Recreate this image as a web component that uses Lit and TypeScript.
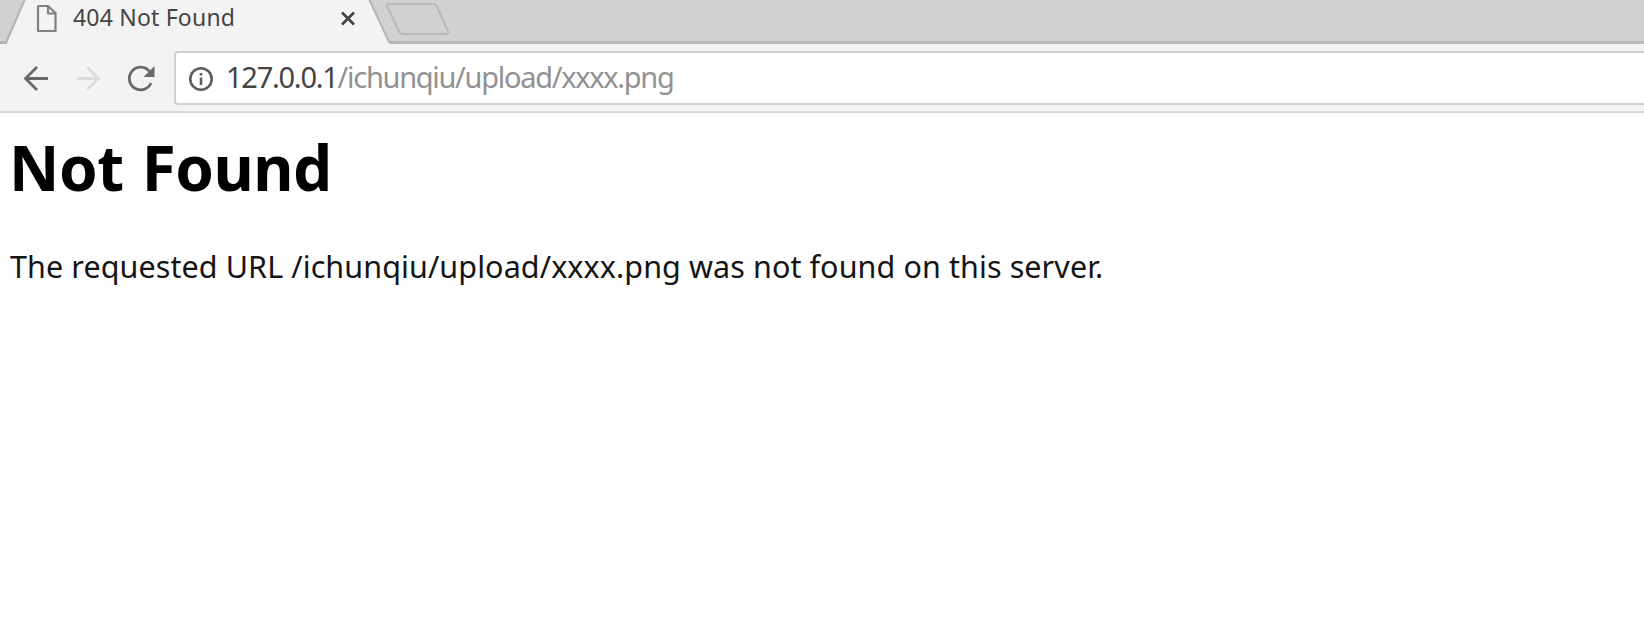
import { LitElement, html, css } from "lit";
import { customElement } from "lit/decorators.js";

@customElement("app-root")
export class AppRoot extends LitElement {
  static styles = css`
    :host { display: block; width: 100%; height: 644px; overflow: hidden; background: #fefefe; font-family: "Noto Sans", "Open Sans", sans-serif; }
    .strip { display: grid; height: 44px; background: #d1d1d1; }
    .shape { grid-area: 1 / 1; display: block; width: 100%; height: 44px; }
    .tab { grid-area: 1 / 1; display: flex; align-items: flex-start; z-index: 1; padding-left: 36px; }
    .page { width: 22px; height: 33px; flex: none; }
    .title { width: 282px; padding-left: 15px; box-sizing: border-box; font-size: 23px; line-height: 35px; color: #444; white-space: pre; letter-spacing: 0.2px; }
    .close { width: 16px; height: 33px; flex: none; }
    .bar { display: flex; height: 69px; box-sizing: border-box; padding-top: 7px; background: #f3f3f3; border-bottom: 2px solid #d7d7d8; }
    .nav { width: 174px; height: 54px; flex: none; }
    .box { flex: 1; height: 54px; box-sizing: border-box; border: 2px solid #d0d0d1; border-right: 0; border-radius: 4px 0 0 4px; background: #fff; display: flex; align-items: center; }
    .info { width: 26px; height: 26px; flex: none; margin-left: 12px; margin-top: 2px; }
    .url { font-size: 29px; line-height: 46px; white-space: pre; margin-left: 12px; margin-top: -2px; }
    .host { color: #444; letter-spacing: -1.25px; }
    .path { color: #929292; letter-spacing: -1.3px; }
    h1 { margin: 23px 0 0 9px; font-size: 62px; line-height: 62px; font-weight: 700; color: #000; white-space: pre; letter-spacing: -0.5px; word-spacing: 2.5px; }
    p { margin: 46px 0 0 10px; font-size: 30.5px; line-height: 44px; color: #151515; white-space: pre; letter-spacing: 0.09px; }
  `;
  render() {
    return html`
      <div class="strip">
        <svg class="shape" fill="none">
          <rect y="41" width="100%" height="3" fill="#b9b9b9"/>
          <path d="M25 -1L6 44H390L369 -1Z" fill="#f3f3f3"/>
          <path d="M25 -1L6 43H0M369 -1L389 42H396" stroke="#b4b4b4" stroke-width="2"/>
          <path d="M388 4H433Q436 4 437 7L448 31Q449 34 446 34H403Q400 34 399 31L387 6Q386 4 388 4Z" stroke="#b9b9b9" stroke-width="2"/>
        </svg>
        <div class="tab">
          <svg class="page" viewBox="0 0 22 33" fill="none" stroke="#818181" stroke-width="2.2" stroke-linejoin="round"><path d="M3 6H12L19.5 13V31H2V7Q2 6 3 6ZM12 6V13.5H19.5"/></svg>
          <span class="title">404 Not Found</span>
          <svg class="close" viewBox="0 0 16 33" stroke="#444" stroke-width="2.7"><path d="M2 12.5L14 24.5M14 12.5L2 24.5"/></svg>
        </div>
      </div>
      <div class="bar">
        <svg class="nav" viewBox="0 51 174 54" fill="none" stroke-width="2.8">
          <path d="M48 78.5H26M37 67L25.5 78.5L37 90" stroke="#696969"/>
          <path d="M77 78.5H98M87.5 67.5L98.5 78.5L87.5 89.5" stroke="#dcdcdc"/>
          <path d="M151 83A11.3 11.3 0 1 1 149.5 71.5" stroke="#696969"/>
          <path d="M154.500 66V77H143.500Z" fill="#696969"/>
        </svg>
        <div class="box">
          <svg class="info" viewBox="0 0 26 26" fill="none" stroke="#5d5d5d" stroke-width="2.6"><circle cx="13" cy="13" r="10.700"/><path d="M13 11.500V19M13 7V9.500"/></svg>
          <span class="url"><span class="host">127.0.0.1</span><span class="path">/ichunqiu/upload/xxxx.png</span></span>
        </div>
      </div>
      <h1>Not Found</h1>
      <p>The requested URL /ichunqiu/upload/xxxx.png was not found on this server.</p>
    `;
  }
}
